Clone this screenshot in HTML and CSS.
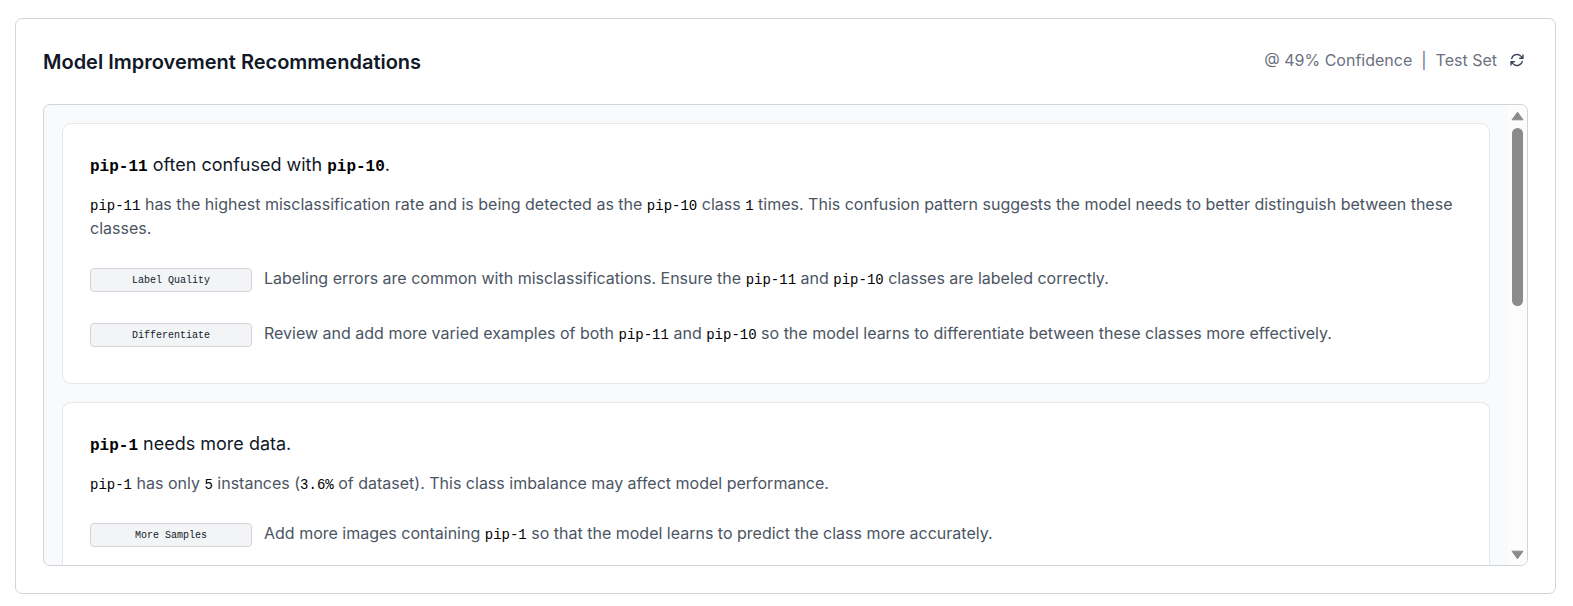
FILE: index.html
```html
<!DOCTYPE html>
<html lang="en">
<head>
  <meta charset="UTF-8" />
  <meta name="viewport" content="width=device-width, initial-scale=1.0"/>
  <title>Model Improvement Recommendations</title>
  <link rel="stylesheet" href="styles.css">
</head>
<body>

  <section class="panel">
    <header class="panel-header">
      <h1>Model Improvement Recommendations</h1>
      <div class="panel-meta">
        <span>@ 49% Confidence</span>
        <span>|</span>
        <span>Test Set</span>
        <button type="button" class="refresh" aria-label="Refresh">
          <svg viewBox="0 0 24 24" fill="none" stroke="currentColor" stroke-width="2" stroke-linecap="round" stroke-linejoin="round">
            <path d="M16.023 9.348h4.992v-.001M2.985 19.644v-4.992m0 0h4.992m-4.993 0 3.181 3.183a8.25 8.25 0 0 0 13.803-3.7M4.031 9.865a8.25 8.25 0 0 1 13.803-3.7l3.181 3.182m0-4.991v4.99"/>
          </svg>
        </button>
      </div>
    </header>

    <div class="list-wrap">
      <div class="list">
        <article class="card">
          <h2><code>pip-11</code> often confused with <code>pip-10</code>.</h2>
          <p><code>pip-11</code> has the highest misclassification rate and is being detected as the <code>pip-10</code> class <code>1</code> times. This confusion pattern suggests the model needs to better distinguish between these classes.</p>
          <ul class="tips">
            <li>
              <span class="tag">Label Quality</span>
              <span>Labeling errors are common with misclassifications. Ensure the <code>pip-11</code> and <code>pip-10</code> classes are labeled correctly.</span>
            </li>
            <li>
              <span class="tag">Differentiate</span>
              <span>Review and add more varied examples of both <code>pip-11</code> and <code>pip-10</code> so the model learns to differentiate between these classes more effectively.</span>
            </li>
          </ul>
        </article>

        <article class="card">
          <h2><code>pip-1</code> needs more data.</h2>
          <p><code>pip-1</code> has only <code>5</code> instances (<code>3.6%</code> of dataset). This class imbalance may affect model performance.</p>
          <ul class="tips">
            <li>
              <span class="tag">More Samples</span>
              <span>Add more images containing <code>pip-1</code> so that the model learns to predict the class more accurately.</span>
            </li>
          </ul>
        </article>
      </div>

      <div class="scrollbar" aria-hidden="true">
        <svg class="arrow" viewBox="0 0 13 10"><path d="M6.500 1.200 12 8.800H1z"/></svg>
        <div class="track"><div class="thumb"></div></div>
        <svg class="arrow" viewBox="0 0 13 10"><path d="M6.500 8.800 1 1.200h11z"/></svg>
      </div>
    </div>
  </section>

</body>
</html>
```

FILE: styles.css
```css
* {
  box-sizing: border-box;
}

body {
  display: flex;
  height: 100vh;
  margin: 0;
  padding: 18px 17px 12px 15px;
  background: #fff;
  color: #111827;
  font-family: Inter, sans-serif;
  font-size: 16px;
  line-height: 24px;
}

h1, h2, p, ul {
  margin: 0;
  padding: 0;
}

code {
  color: #000;
  font-family: "Liberation Mono", monospace;
  font-size: 14px;
  line-height: 1;
}

.panel {
  display: flex;
  flex: 1;
  flex-direction: column;
  min-width: 0;
  padding: 27px;
  border: 1px solid #d1d5db;
  border-radius: 7px;
}

.panel-header {
  display: flex;
  justify-content: space-between;
  margin-bottom: 26px;
}

h1 {
  font-size: 20px;
  font-weight: 600;
  font-optical-sizing: none;
  line-height: 32px;
}

.panel-meta {
  display: flex;
  align-items: center;
  gap: 9px;
  height: 28px;
  color: #6b7280;
}

.refresh {
  display: flex;
  margin: 0 3px;
  padding: 0;
  border: none;
  background: none;
  color: #374151;
  cursor: pointer;
}

.refresh svg {
  width: 16px;
  height: 16px;
}

.list-wrap {
  display: flex;
  flex: 1;
  min-height: 0;
  overflow: hidden;
  background: #f9fafb;
  border: 1px solid #d1d5db;
  border-radius: 7px;
}

.list {
  flex: 1;
  min-width: 0;
  padding: 18px;
  overflow-y: auto;
  scrollbar-width: none;
}

.card {
  margin-bottom: 18px;
  padding: 27px 27px 36px;
  background: #fff;
  border: 1px solid #e5e7eb;
  border-radius: 9px;
}

.card h2 {
  margin-bottom: 13px;
  font-size: 18px;
  font-weight: 400;
  line-height: 28px;
}

.card h2 code {
  font-size: 16px;
  font-weight: 700;
}

.card p, .tips {
  color: #4b5563;
}

.tips {
  display: grid;
  gap: 29px;
  margin-top: 26px;
  list-style: none;
}

.tips li {
  display: flex;
  gap: 12px;
}

.tag {
  flex: none;
  width: 162px;
  margin-top: 2px;
  padding-top: 2px;
  background: #f3f4f6;
  border: 1px solid #d1d5db;
  border-radius: 4px;
  color: #111827;
  font-family: "Liberation Mono", monospace;
  font-size: 10px;
  line-height: 20px;
  text-align: center;
}

/* scrollbar */
.scrollbar {
  display: flex;
  flex-direction: column;
  align-items: center;
  width: 19px;
  padding: 6px 0 5px;
  background: #fcfcfc;
}

.arrow {
  width: 13px;
  height: 10px;
  fill: #8b8b8b;
  stroke: #8b8b8b;
  stroke-linejoin: round;
}

.track {
  flex: 1;
  padding: 7px 0;
}

.thumb {
  width: 11px;
  height: 43%;
  background: #8b8b8b;
  border-radius: 6px;
}
```
